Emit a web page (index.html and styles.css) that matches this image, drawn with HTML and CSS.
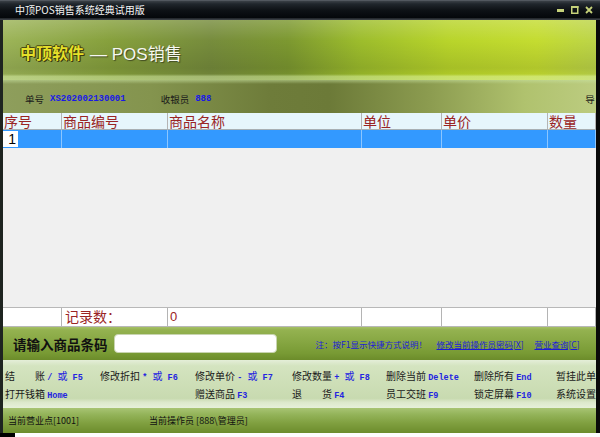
FILE: index.html
```html
<!DOCTYPE html>
<html lang="zh-CN">
<head>
<meta charset="utf-8">
<title>中顶POS销售系统经典试用版</title>
<link rel="stylesheet" href="styles.css">
</head>
<body>
<div class="win">
  <div class="titlebar">
    <span class="title">中顶POS销售系统经典试用版</span>
    <div class="ctrls">
      <svg class="ic" width="8" height="8" viewBox="0 0 8 8"><rect x="0" y="3" width="7" height="3" fill="#c6d27a"/></svg>
      <svg class="ic" width="8" height="8" viewBox="0 0 8 8"><rect x="0.75" y="0.75" width="6" height="6.5" fill="none" stroke="#c6d27a" stroke-width="1.5"/><rect x="0" y="0" width="7.5" height="2" fill="#c6d27a"/></svg>
      <svg class="ic" width="8" height="8" viewBox="0 0 8 8"><path d="M1 1 L7 7 M7 1 L1 7" stroke="#c6d27a" stroke-width="1.8"/></svg>
    </div>
  </div>
  <div class="frame">
    <div class="banner">
      <span class="brand">中顶软件</span><span class="sub">— POS销售</span>
    </div>
    <div class="info">
      <span class="lbl no">单号</span><span class="val">XS202002130001</span>
      <span class="lbl cashier">收银员</span><span class="val">888</span>
      <span class="lbl guide">导</span>
    </div>
    <div class="row head">
      <div class="c">序号</div>
      <div class="c">商品编号</div>
      <div class="c">商品名称</div>
      <div class="c">单位</div>
      <div class="c">单价</div>
      <div class="c">数量</div>
    </div>
    <div class="row sel">
      <div class="c"><span class="editor">1</span></div>
      <div class="c"></div>
      <div class="c"></div>
      <div class="c"></div>
      <div class="c"></div>
      <div class="c"></div>
    </div>
    <div class="empty"></div>
    <div class="row foot">
      <div class="c"></div>
      <div class="c">记录数：</div>
      <div class="c">0</div>
      <div class="c"></div>
      <div class="c"></div>
      <div class="c"></div>
    </div>
    <div class="barcode">
      <span class="bc-label">请输入商品条码</span>
      <span class="bc-input"></span>
      <span class="note">注：按F1显示快捷方式说明！</span>
      <span class="link pwd">修改当前操作员密码[X]</span>
      <span class="link">营业查询[C]</span>
    </div>
    <div class="keys">
      <div class="k">结　　账 <b>/ <i>或</i> F5</b></div>
      <div class="k">修改折扣 <b>* <i>或</i> F6</b></div>
      <div class="k">修改单价 <b>- <i>或</i> F7</b></div>
      <div class="k">修改数量 <b>+ <i>或</i> F8</b></div>
      <div class="k">删除当前 <b>Delete</b></div>
      <div class="k">删除所有 <b>End</b></div>
      <div class="k">暂挂此单</div>
      <div class="k">打开钱箱 <b>Home</b></div>
      <div class="k"></div>
      <div class="k">赠送商品 <b>F3</b></div>
      <div class="k">退　　货 <b>F4</b></div>
      <div class="k">员工交班 <b>F9</b></div>
      <div class="k">锁定屏幕 <b>F10</b></div>
      <div class="k">系统设置</div>
    </div>
    <div class="status">
      <span class="st">当前营业点[1001]</span>
      <span class="st op">当前操作员 [888\管理员]</span>
    </div>
  </div>
  <div class="bottom"><span class="blk"></span></div>
</div>
</body>
</html>
```

FILE: styles.css
```css
* { box-sizing: border-box; margin: 0; padding: 0; }
html, body { width: 600px; height: 437px; overflow: hidden; background: #fff; }
body { font-family: "Noto Sans CJK SC", "Liberation Sans", sans-serif; color: #1a1a1a; }

.win { width: 600px; height: 437px; display: flex; flex-direction: column; }

.titlebar {
  height: 20px; flex: none;
  display: flex; align-items: center; justify-content: space-between;
  padding: 0 7px 0 15px;
  background: linear-gradient(#6a7078 0, #3a4046 1px, #20262c 4px, #0e1216 10px, #04070a 18px, #464c52 19px, #2a2e32 20px);
}
.title { color: #f4f4f4; font-size: 10px; line-height: 1; }
.ctrls { display: flex; gap: 6px; align-items: center; }
.ic { display: block; }

.frame {
  flex: none; height: 413px;
  display: flex; flex-direction: column;
  border-left: 3px solid #1e2420;
  border-right: 4px solid #0a0a0a;
  overflow: hidden;
}

.banner {
  height: 60px; flex: none;
  display: flex; align-items: center;
  padding: 4px 0 0 17px;
  background:
    linear-gradient(180deg, rgba(255,255,255,0.18) 0%, rgba(255,255,255,0) 35%, rgba(0,0,0,0.10) 80%, rgba(0,0,0,0.06) 90%, rgba(220,240,180,0.45) 94%, rgba(220,240,180,0.5) 100%),
    linear-gradient(90deg, #9cb458 0%, #86a03c 18%, #768c3c 35%, #7c9830 48%, #9cbc2c 60%, #b8d42a 75%, #c4dc30 90%, #bcd448 100%);
}
.brand {
  font-size: 16px; color: #e6e02a; font-weight: bold;
  text-shadow: 1px 1px 0 #3a3a10, -1px 0 0 #3a3a10, 0 -1px 0 #4a4a18, 1px 0 1px #2a2a08;
}
.sub {
  font-size: 17px; color: #f6f8f0; margin-left: 6px;
  font-family: "Liberation Sans", "Noto Sans CJK SC", sans-serif;
  text-shadow: 1px 1px 1px #404a20;
}

.info {
  height: 33px; flex: none;
  display: flex; align-items: center;
  padding: 4px 0 0 22px;
  white-space: nowrap;
  background:
    linear-gradient(180deg, rgba(200,225,160,0.55) 0, rgba(200,225,160,0) 4px),
    linear-gradient(90deg, #8e9e5c 0%, #84944e 25%, #6e7c3a 45%, #6c7a38 55%, #8c9c50 72%, #b0c26e 88%, #bccc80 100%);
}
.lbl { font-size: 9.5px; color: #1a1a1a; }
.val { font-family: "Liberation Mono", monospace; font-weight: bold; font-size: 9px; color: #1818e8; margin-left: 6px; }
.cashier { margin-left: 35px; }
.guide { margin-left: 374px; }

.row {
  flex: none;
  display: grid;
  grid-template-columns: 59px 106px 194px 80px 106px 1fr;
}
.row .c { border-right: 1px solid #b4b4b4; white-space: nowrap; }

.head { height: 17px; background: #e6f6fc; border-bottom: 1px solid #a8b0b4; }
.head .c { font-size: 14px; line-height: 16px; color: #9a2424; padding-left: 1px; }

.sel { height: 18px; background: #3399ff; }
.sel .c { border-right-color: #8cc6ff; }
.editor {
  display: block; width: 15px; height: 16px; margin-top: 1px;
  background: #fff; color: #000;
  font-family: "Liberation Sans", sans-serif; font-size: 14px; line-height: 16px;
  text-align: right; padding-right: 2px;
}

.empty { height: 159px; flex: none; background: #f0f0f0; }

.foot { height: 20px; background: #fff; border-top: 1px solid #b8b8b8; border-bottom: 1px solid #b8b8b8; }
.foot .c { font-size: 14px; line-height: 17px; color: #9a2424; padding-left: 3px; }
.foot .c:nth-child(3) { padding-left: 2px; font-family: "Liberation Sans", sans-serif; font-size: 13px; }

.barcode {
  height: 33px; flex: none;
  display: flex; align-items: center;
  padding: 0 0 0 10px;
  white-space: nowrap;
  background: linear-gradient(180deg, #a6c066 0, #94b250 3px, #88a844 40%, #789a34 80%, #6c8c2a 100%);
}
.bc-label { font-size: 13.5px; font-weight: bold; color: #111; }
.bc-input {
  display: block; width: 163px; height: 19px; margin-left: 6px;
  background: #fff; border-radius: 4px; border: 1px solid #c8d4b0;
}
.note { display: block; width: 121px; margin-left: 39px; font-size: 8.5px; color: #1c1cd8; }
.link { font-size: 8.5px; color: #1c1cd8; text-decoration: underline; }
.pwd { display: block; width: 98px; }

.keys {
  height: 48px; flex: none;
  display: grid;
  grid-template-columns: 95px 95px 97px 94px 88px 82px 1fr;
  grid-template-rows: 18px 18px;
  padding: 7px 0 0 2px;
  background: linear-gradient(180deg, #e4eed8 0, #d4e4c0 12%, #c8dab0 80%, #dce8cc 88%, #e6f0da 100%);
}
.k { font-size: 10px; line-height: 18px; color: #1a1a1a; white-space: nowrap; }
.k b { font-family: "Liberation Mono", monospace; font-weight: bold; font-size: 8.5px; color: #2424e0; }
.k i { font-style: normal; font-weight: normal; font-family: "Noto Sans CJK SC", sans-serif; font-size: 10px; }

.status {
  height: 25px; flex: none;
  display: flex; align-items: center;
  padding: 0 0 0 5px;
  white-space: nowrap;
  background: linear-gradient(180deg, #a8c474 0, #94b45a 25%, #80a040 60%, #6c8c2c 100%);
}
.st { font-size: 9px; color: #111; }
.op { margin-left: 70px; }

.bottom { height: 4px; flex: none; background: #fdfdfd; display: flex; }
.blk { display: block; width: 15px; background: #000; }
```
